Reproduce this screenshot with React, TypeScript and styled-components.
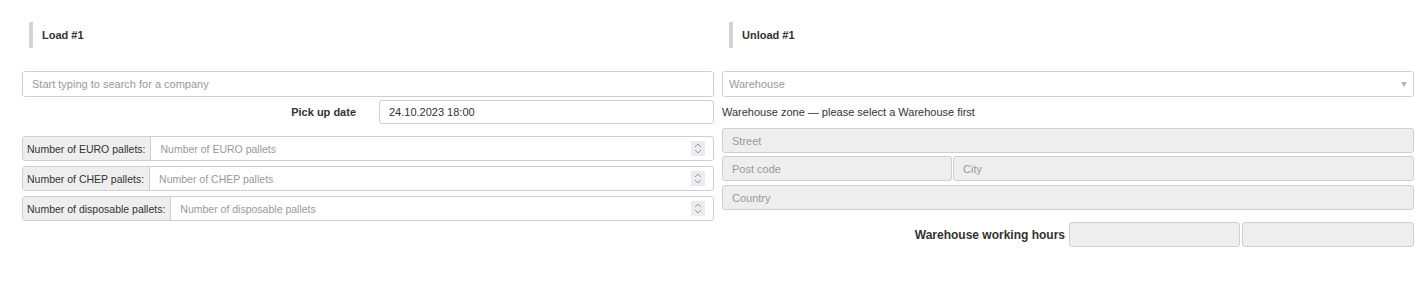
import { FC } from 'react'
import styled, { createGlobalStyle } from 'styled-components'

// global
const GlobalStyle = createGlobalStyle`
    html, body {
        margin: 0;
        padding: 0;
        background: #fff;
    }

    body {
        font-family: "Liberation Sans", Arial, sans-serif;
        font-size: 11px;
        color: #333;
    }

    * {
        box-sizing: border-box;
    }
`

// styles
const Page = styled.div`
    display: grid;
    grid-template-columns: 692px 692px;
    column-gap: 8px;
    padding: 22px 14px 0 22px;
    height: 299px;
`

const Column = styled.section`
    display: flex;
    flex-direction: column;
`

const SectionTitle = styled.h3`
    margin: 0 0 23px 7px;
    height: 26px;
    border-left: 4px solid #d4d4d4;
    padding-left: 9px;
    display: flex;
    align-items: center;
    font-size: 11px;
    font-weight: bold;
    color: #333;
`

const TextInput = styled.input<{ $disabled?: boolean; $pad?: number }>`
    display: block;
    width: 100%;
    height: ${({ $disabled }) => ($disabled ? '25px' : '26px')};
    border: 1px solid #cfcfcf;
    border-radius: 3px;
    padding: 0 ${({ $pad }) => $pad ?? 9}px;
    font-family: inherit;
    font-size: 11px;
    color: #333;
    background: ${({ $disabled }) => ($disabled ? '#eeeeee' : '#fff')};
    outline: none;

    &::placeholder {
        color: #999;
    }
`

const DateRow = styled.div`
    margin-top: 3px;
    display: grid;
    grid-template-columns: 1fr 335px;
    align-items: center;
`

const BoldLabel = styled.label`
    font-weight: bold;
    text-align: right;
    padding-right: 23px;
    font-size: 11px;
    color: #333;
`

const DateInput = styled(TextInput)`
    height: 24px;
`

const PalletList = styled.div`
    margin-top: 12px;
    display: flex;
    flex-direction: column;
    gap: 5px;
`

const InputGroup = styled.div`
    display: flex;
    height: 25px;
    border: 1px solid #cfcfcf;
    border-radius: 3px;
    overflow: hidden;
    font-size: 10.5px;
`

const Addon = styled.span`
    display: flex;
    align-items: center;
    padding: 0 5px 0 4px;
    background: #eeeeee;
    border-right: 1px solid #cfcfcf;
    white-space: nowrap;
    color: #333;
`

const GroupField = styled.div`
    flex: 1;
    display: flex;
    align-items: center;
    padding: 0 8px 0 9px;
`

const BareInput = styled.input`
    flex: 1;
    border: none;
    outline: none;
    padding: 0;
    font-family: inherit;
    font-size: 10.5px;
    color: #333;
    background: transparent;

    &::placeholder {
        color: #999;
    }
`

const Spinner = styled.span`
    width: 14px;
    height: 15px;
    background: #ebebf0;
    display: flex;
    align-items: center;
    justify-content: center;
`

const Select = styled.div`
    height: 26px;
    border: 1px solid #cfcfcf;
    border-radius: 3px;
    display: flex;
    align-items: center;
    justify-content: space-between;
    padding: 0 6px 0 6px;
    color: #999;
`

const Caret = styled.span`
    width: 0;
    height: 0;
    border-left: 3px solid transparent;
    border-right: 3px solid transparent;
    border-top: 5px solid #b5b5b5;
`

const HelpText = styled.div`
    margin-top: 7px;
    line-height: 16px;
    color: #333;
`

const Stack = styled.div<{ $top: number }>`
    margin-top: ${({ $top }) => $top}px;
`

const SplitRow = styled.div<{ $gap: number; $cols: string }>`
    display: grid;
    grid-template-columns: ${({ $cols }) => $cols};
    gap: ${({ $gap }) => $gap}px;
    align-items: center;
`

const HoursLabel = styled(BoldLabel)`
    padding-right: 2px;
    font-size: 12px;
`

// spin icon
const SpinIcon: FC = () => (
    <svg width="8" height="11" viewBox="0 0 8 11" fill="none" stroke="#9a9a9a" strokeWidth="1">
        <path d="M1 4 L4 1 L7 4" />
        <path d="M1 7 L4 10 L7 7" />
    </svg>
)

const pallets = ['EURO', 'CHEP', 'disposable']

// component current
const App: FC = () => {
    return (
        <>
            <GlobalStyle />
            <Page>
                <Column>
                    <SectionTitle>Load #1</SectionTitle>

                    <TextInput placeholder="Start typing to search for a company" />

                    <DateRow>
                        <BoldLabel>Pick up date</BoldLabel>
                        <DateInput defaultValue="24.10.2023 18:00" />
                    </DateRow>

                    <PalletList>
                        {pallets.map((kind) => (
                            <InputGroup key={kind}>
                                <Addon>Number of {kind} pallets:</Addon>
                                <GroupField>
                                    <BareInput placeholder={`Number of ${kind} pallets`} />
                                    <Spinner>
                                        <SpinIcon />
                                    </Spinner>
                                </GroupField>
                            </InputGroup>
                        ))}
                    </PalletList>
                </Column>

                <Column>
                    <SectionTitle>Unload #1</SectionTitle>

                    <Select>
                        <span>Warehouse</span>
                        <Caret />
                    </Select>

                    <HelpText>Warehouse zone — please select a Warehouse first</HelpText>

                    <Stack $top={8}>
                        <TextInput $disabled placeholder="Street" />
                    </Stack>

                    <Stack $top={3}>
                        <SplitRow $gap={1} $cols="230px 1fr">
                            <TextInput $disabled placeholder="Post code" />
                            <TextInput $disabled placeholder="City" />
                        </SplitRow>
                    </Stack>

                    <Stack $top={4}>
                        <TextInput $disabled placeholder="Country" />
                    </Stack>

                    <Stack $top={12}>
                        <SplitRow $gap={2} $cols="1fr 171px 172px">
                            <HoursLabel>Warehouse working hours</HoursLabel>
                            <TextInput $disabled />
                            <TextInput $disabled />
                        </SplitRow>
                    </Stack>
                </Column>
            </Page>
        </>
    )
}

export default App
